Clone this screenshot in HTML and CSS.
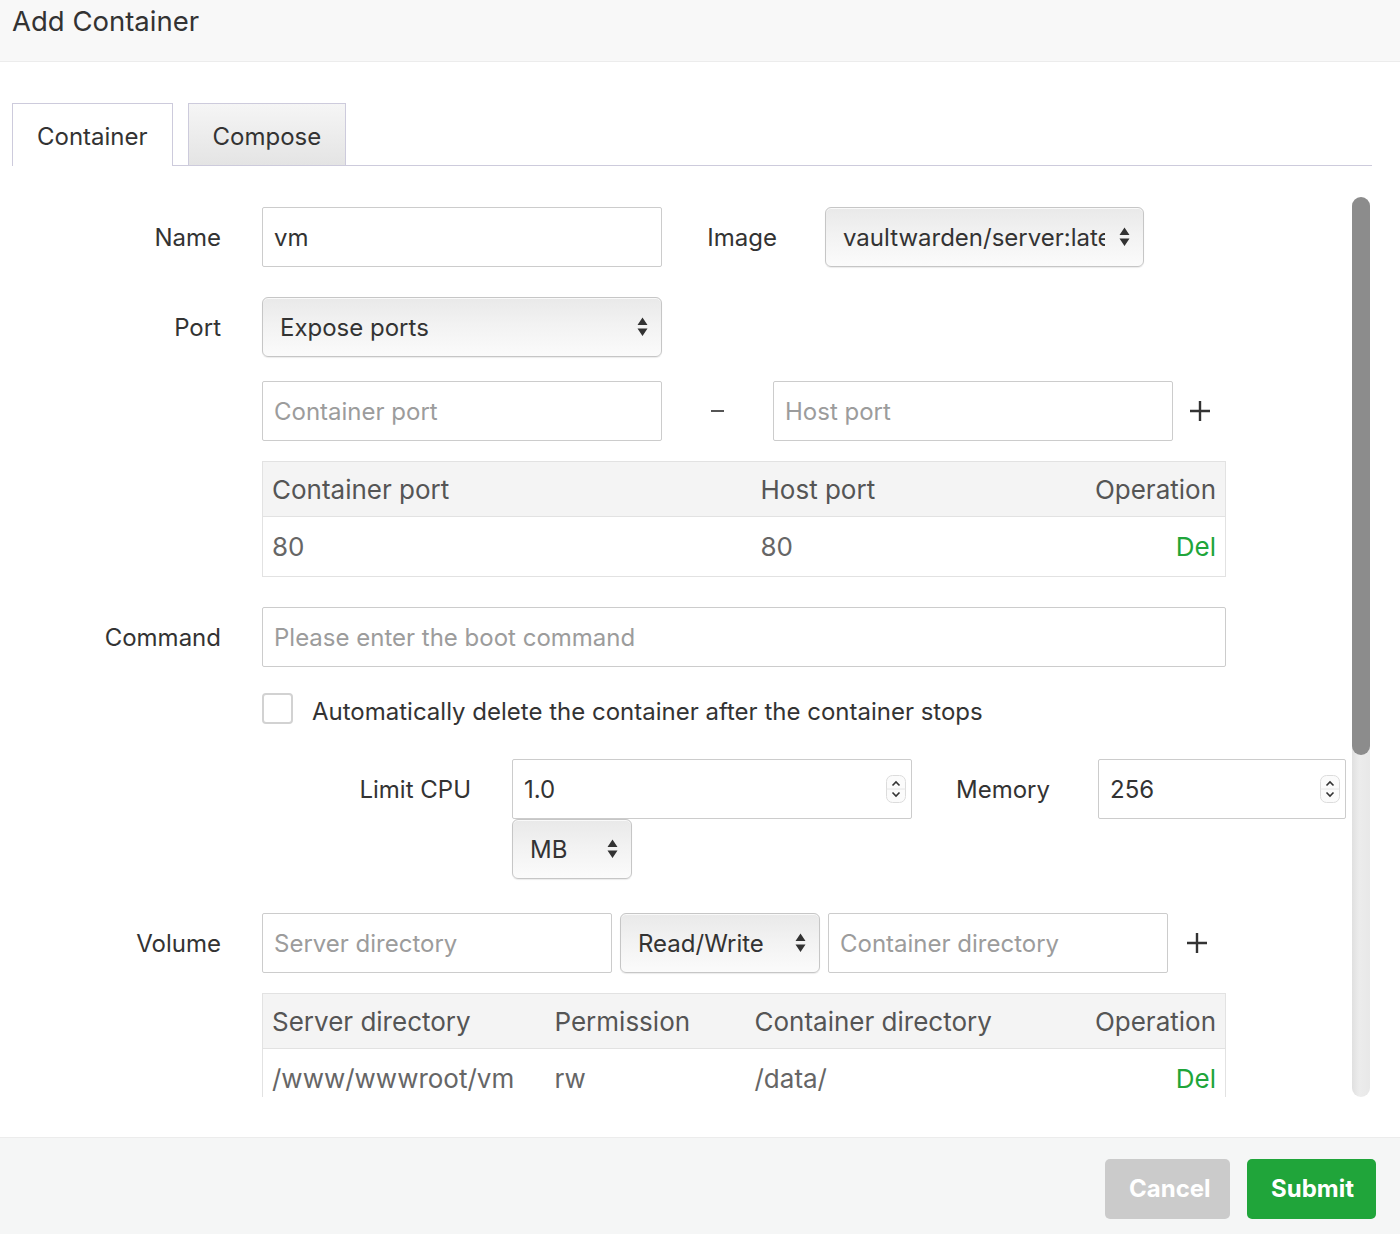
FILE: index.html
```html
<!DOCTYPE html>
<html lang="en">
<head>
<meta charset="utf-8">
<title>Add Container</title>
<link rel="stylesheet" href="styles.css">
</head>
<body>
<div class="dialog">
  <div class="header">Add Container</div>
  <div class="main">
    <div class="tabs">
      <div class="tab active">Container</div>
      <div class="tab">Compose</div>
    </div>
    <div class="scroll-wrap">
      <div class="scroll">
        <div class="form">
          <div class="row">
            <label class="label">Name</label>
            <input class="input w400" type="text" value="vm">
            <label class="label-image">Image</label>
            <div class="select w319">
              <span class="sel-text">vaultwarden/server:latest</span>
              <svg class="arrows" width="11" height="20" viewBox="0 0 11 20"><path d="M0.5 8 L5.5 0.5 L10.5 8 Z M0.5 11.5 L10.5 11.5 L5.5 19 Z" fill="#333"/></svg>
            </div>
          </div>

          <div class="row mt30">
            <label class="label">Port</label>
            <div class="select w400">
              <span class="sel-text">Expose ports</span>
              <svg class="arrows" width="11" height="20" viewBox="0 0 11 20"><path d="M0.5 8 L5.5 0.5 L10.5 8 Z M0.5 11.5 L10.5 11.5 L5.5 19 Z" fill="#333"/></svg>
            </div>
          </div>

          <div class="row mt24 indent">
            <input class="input w400" type="text" placeholder="Container port">
            <span class="dash"><svg width="14" height="4" viewBox="0 0 14 4"><rect x="0" y="1" width="13" height="2" fill="#555"/></svg></span>
            <input class="input w400" type="text" placeholder="Host port">
            <span class="plus"><svg width="22" height="22" viewBox="0 0 22 22"><path d="M11 1 V21 M1 11 H21" stroke="#333" stroke-width="2.4"/></svg></span>
          </div>

          <div class="indent mt20">
            <table class="tbl">
              <colgroup><col class="c489"><col><col class="c200"></colgroup>
              <thead><tr><th>Container port</th><th>Host port</th><th class="right">Operation</th></tr></thead>
              <tbody><tr><td>80</td><td>80</td><td class="right"><a class="del">Del</a></td></tr></tbody>
            </table>
          </div>

          <div class="row mt30">
            <label class="label">Command</label>
            <input class="input w964" type="text" placeholder="Please enter the boot command">
          </div>

          <div class="row mt26 indent">
            <input class="checkbox" type="checkbox">
            <span class="check-text">Automatically delete the container after the container stops</span>
          </div>

          <div class="indent mt35">
            <div class="row">
              <label class="label">Limit CPU</label>
              <div class="num w400">
                <input class="num-input" type="text" value="1.0">
                <svg class="spin" width="20" height="28" viewBox="0 0 20 28"><rect x="0.5" y="0.5" width="19" height="27" rx="6" fill="#fbfbfb" stroke="#dcdcdc"/><path d="M0.5 14 H19.5" stroke="#e6e6e6"/><path d="M6.5 10.5 L10 7 L13.5 10.5 M6.5 17.5 L10 21 L13.5 17.5" stroke="#333" stroke-width="1.6" fill="none"/></svg>
              </div>
              <label class="label-mem">Memory</label>
              <div class="num w248">
                <input class="num-input" type="text" value="256">
                <svg class="spin" width="20" height="28" viewBox="0 0 20 28"><rect x="0.5" y="0.5" width="19" height="27" rx="6" fill="#fbfbfb" stroke="#dcdcdc"/><path d="M0.5 14 H19.5" stroke="#e6e6e6"/><path d="M6.5 10.5 L10 7 L13.5 10.5 M6.5 17.5 L10 21 L13.5 17.5" stroke="#333" stroke-width="1.6" fill="none"/></svg>
              </div>
            </div>
            <div class="row indent">
              <div class="select w120">
                <span class="sel-text">MB</span>
                <svg class="arrows" width="11" height="20" viewBox="0 0 11 20"><path d="M0.5 8 L5.5 0.5 L10.5 8 Z M0.5 11.5 L10.5 11.5 L5.5 19 Z" fill="#333"/></svg>
              </div>
            </div>
          </div>

          <div class="row mt34">
            <label class="label">Volume</label>
            <input class="input w350" type="text" placeholder="Server directory">
            <div class="select w200 ml8">
              <span class="sel-text">Read/Write</span>
              <svg class="arrows" width="11" height="20" viewBox="0 0 11 20"><path d="M0.5 8 L5.5 0.5 L10.5 8 Z M0.5 11.5 L10.5 11.5 L5.5 19 Z" fill="#333"/></svg>
            </div>
            <input class="input w340 ml8" type="text" placeholder="Container directory">
            <span class="plus plus-vol"><svg width="22" height="22" viewBox="0 0 22 22"><path d="M11 1 V21 M1 11 H21" stroke="#333" stroke-width="2.4"/></svg></span>
          </div>

          <div class="indent mt20">
            <table class="tbl">
              <colgroup><col class="c283"><col class="c200"><col><col class="c200"></colgroup>
              <thead><tr><th>Server directory</th><th>Permission</th><th>Container directory</th><th class="right">Operation</th></tr></thead>
              <tbody><tr><td>/www/wwwroot/vm</td><td>rw</td><td>/data/</td><td class="right"><a class="del">Del</a></td></tr></tbody>
            </table>
          </div>
        </div>
      </div>
      <div class="scrollbar"><div class="thumb"></div></div>
    </div>
  </div>
  <div class="footer">
    <button class="btn btn-cancel">Cancel</button>
    <button class="btn btn-submit">Submit</button>
  </div>
</div>
</body>
</html>
```

FILE: styles.css
```css
* { box-sizing: border-box; }
html, body { margin: 0; padding: 0; background: #fff; }
body {
  font-family: Inter, "Liberation Sans", Arial, sans-serif;
  font-size: 24px;
  color: #333;
}
.dialog {
  width: 1400px;
  height: 1234px;
  display: flex;
  flex-direction: column;
  overflow: hidden;
}
.header {
  height: 62px;
  flex: none;
  background: #f8f8f8;
  border-bottom: 1px solid #ececec;
  padding: 0 12px;
  line-height: 43px;
  font-size: 27.5px;
  color: #333;
}
.main {
  flex: none;
  padding-left: 12px;
}
.tabs {
  margin-top: 41px;
  width: 1360px;
  height: 63px;
  display: flex;
  align-items: flex-end;
  gap: 15px;
  border-bottom: 1px solid #cdcbdc;
}
.tab {
  height: 62px;
  border: 1px solid #cdcbdc;
  border-bottom: none;
  padding: 0 24px;
  line-height: 66px;
  font-size: 24px;
  color: #333;
  background: linear-gradient(#f5f5f5, #e4e4e4);
}
.tab.active {
  height: 63px;
  margin-bottom: -1px;
  background: #fff;
}
.scroll-wrap {
  margin-top: 31px;
  width: 1358px;
  height: 900px;
  display: flex;
}
.scroll {
  flex: 1;
  min-width: 0;
  overflow: hidden;
}
.scrollbar {
  width: 18px;
  flex: none;
  border-radius: 9px;
  background: linear-gradient(90deg, #e0e0e0, #ececec 40%, #e8e8e8);
  display: flex;
  flex-direction: column;
}
.thumb {
  height: 558px;
  border-radius: 9px;
  background: #8c8c8c;
}
.form {
  padding-top: 10px;
}
.row {
  display: flex;
  align-items: center;
}
.indent { margin-left: 250px; }
.mt20 { margin-top: 20px; }
.mt24 { margin-top: 24px; }
.mt26 { margin-top: 26px; }
.mt30 { margin-top: 30px; }
.mt34 { margin-top: 34px; }
.mt35 { margin-top: 35px; }
.ml8 { margin-left: 8px; }

.label {
  width: 209px;
  margin-right: 41px;
  text-align: right;
  flex: none;
  color: #333;
}
.label-image {
  width: 115px;
  margin-right: 48px;
  text-align: right;
  flex: none;
}
.label-mem {
  width: 138px;
  margin-right: 48px;
  text-align: right;
  flex: none;
}

.input {
  height: 60px;
  border: 1px solid #cccccc;
  border-radius: 2px;
  padding: 0 11px;
  font-family: inherit;
  font-size: 24px;
  color: #333;
  background: #fff;
  outline: none;
  flex: none;
}
.input::placeholder { color: #9c9c9c; }
.w120 { width: 120px; }
.w200 { width: 200px; }
.w248 { width: 248px; }
.w319 { width: 319px; }
.w340 { width: 340px; }
.w350 { width: 350px; }
.w400 { width: 400px; }
.w964 { width: 964px; }

.select {
  height: 60px;
  display: flex;
  align-items: center;
  border: 1px solid #c6c6c6;
  border-radius: 6px;
  background: linear-gradient(#e9e9e9 0%, #f2f2f2 45%, #fbfbfb 100%);
  box-shadow: inset 0 1px 0 rgba(255,255,255,0.7), 0 1px 1px rgba(0,0,0,0.08);
  padding: 0 13px 0 17px;
  flex: none;
  color: #333;
}
.sel-text {
  flex: 1;
  overflow: hidden;
  white-space: nowrap;
}
.arrows {
  flex: none;
  margin-left: 14px;
}

.dash {
  width: 111px;
  display: flex;
  justify-content: center;
  flex: none;
}
.plus {
  margin-left: 16px;
  display: flex;
  flex: none;
}
.plus-vol { margin-left: 18px; }

.tbl {
  width: 964px;
  border-collapse: collapse;
  border: 1px solid #e2e2e2;
  font-size: 26px;
  color: #666;
}
.tbl th {
  height: 55px;
  background: #f4f4f4;
  font-weight: normal;
  text-align: left;
  padding: 0 9px;
  color: #555;
  border-bottom: 1px solid #e2e2e2;
}
.tbl td {
  height: 60px;
  padding: 0 9px;
  border-bottom: 1px solid #e2e2e2;
}
.tbl .right { text-align: right; }
.c489 { width: 489px; }
.c283 { width: 283px; }
.c200 { width: 200px; }
.del { color: #20a53a; text-decoration: none; }

.checkbox {
  appearance: none;
  -webkit-appearance: none;
  margin: 0;
  width: 31px;
  height: 31px;
  border: 2px solid #d2d2d2;
  border-radius: 4px;
  background: #fff;
  flex: none;
}
.check-text {
  margin-left: 19px;
  position: relative;
  top: 3px;
}

.num {
  height: 60px;
  display: flex;
  align-items: center;
  border: 1px solid #cccccc;
  border-radius: 2px;
  padding: 0 5px 0 11px;
  background: #fff;
  flex: none;
}
.num-input {
  flex: 1;
  min-width: 0;
  border: none;
  outline: none;
  padding: 0;
  font-family: inherit;
  font-size: 24px;
  color: #333;
  background: transparent;
}
.spin { flex: none; }

.footer {
  margin-top: 40px;
  flex: 1;
  background: #f5f6f6;
  border-top: 1px solid #ececec;
  display: flex;
  justify-content: flex-end;
  align-items: flex-start;
  padding: 21px 24px 0 0;
  gap: 17px;
}
.btn {
  height: 60px;
  border: none;
  border-radius: 5px;
  padding: 0 24px 2px;
  font-family: inherit;
  font-size: 24px;
  font-weight: bold;
  color: #fff;
}
.btn-cancel { background: #cbcbcb; width: 125px; }
.btn-submit { background: #20a53a; width: 129px; }
```
